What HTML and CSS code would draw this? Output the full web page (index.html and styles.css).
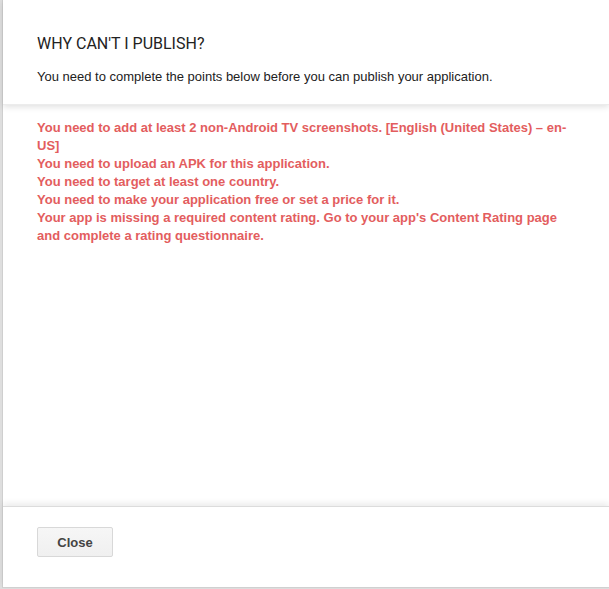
FILE: index.html
```
<!DOCTYPE html>
<html>
<head>
<meta charset="utf-8">
<link rel="stylesheet" href="styles.css">
</head>
<body>
<div class="dialog">
  <div class="header">
    <h1 class="title">WHY CAN'T I PUBLISH?</h1>
    <p class="subtitle">You need to complete the points below before you can publish your application.</p>
  </div>
  <div class="content">
    <ul class="errors">
      <li>You need to add at least 2 non-Android TV screenshots. [English (United States) – en-US]</li>
      <li>You need to upload an APK for this application.</li>
      <li>You need to target at least one country.</li>
      <li>You need to make your application free or set a price for it.</li>
      <li>Your app is missing a required content rating. Go to your app's Content Rating page and complete a rating questionnaire.</li>
    </ul>
  </div>
  <div class="footer">
    <button class="btn">Close</button>
  </div>
</div>
</body>
</html>
```
FILE: styles.css
```
html, body {
  margin: 0;
  padding: 0;
}
body {
  background: #dedede;
  width: 609px;
  height: 589px;
  overflow: hidden;
  font-family: "Liberation Sans", Arial, sans-serif;
}
.dialog {
  margin-left: 2px;
  height: 587px;
  background: #fff;
  border-left: 1px solid #cfcfcf;
  border-bottom: 1px solid #d2d2d2;
  display: flex;
  flex-direction: column;
}
.header {
  height: 105px;
  box-sizing: border-box;
  padding: 34px 0 0 34px;
  position: relative;
  z-index: 1;
  box-shadow: 0 2px 6px rgba(0,0,0,0.12);
  border-bottom: 1px solid #ececec;
}
.title {
  margin: 0;
  font-family: Roboto, "Liberation Sans", sans-serif;
  font-weight: 400;
  font-size: 16px;
  line-height: 20px;
  color: #222;
}
.subtitle {
  margin: 15px 0 0;
  font-size: 13px;
  line-height: 16px;
  color: #222;
}
.content {
  flex: 1;
  padding: 14px 0 0 34px;
}
.errors {
  list-style: none;
  margin: 0;
  padding: 0;
  width: 540px;
  font-size: 13px;
  line-height: 18px;
  font-weight: 700;
  color: #e35d5e;
}
.footer {
  height: 81px;
  box-sizing: border-box;
  padding: 20px 0 0 34px;
  border-top: 1px solid #dcdcdc;
  box-shadow: 0 -3px 6px rgba(0,0,0,0.08);
  position: relative;
}
.btn {
  width: 76px;
  height: 30px;
  border: 1px solid #d8d8d8;
  border-radius: 2px;
  background: linear-gradient(#f6f6f6, #f0f0f0);
  font-family: "Liberation Sans", Arial, sans-serif;
  font-weight: 700;
  font-size: 13px;
  color: #444;
  padding: 0;
}
```
